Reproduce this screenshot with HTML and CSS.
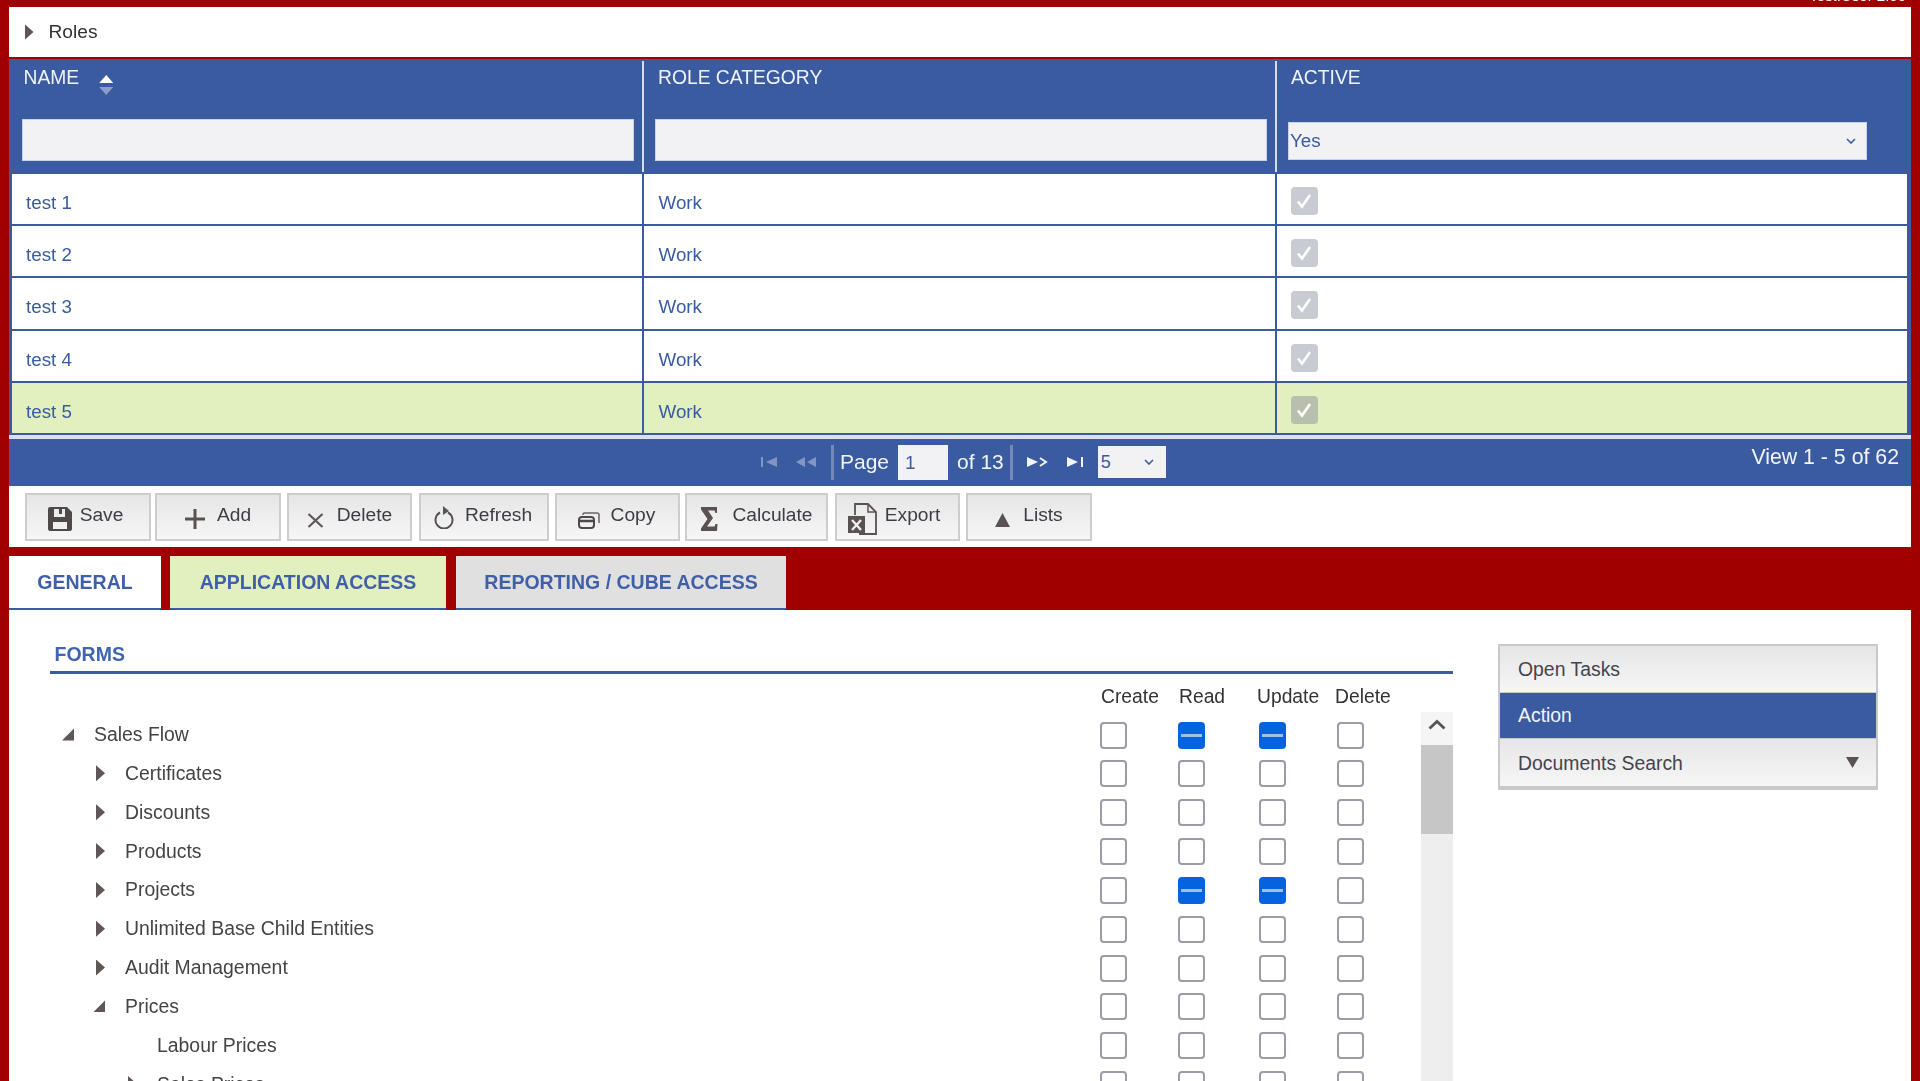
FILE: index.html
```html
<!DOCTYPE html>
<html lang="en">
<head>
<meta charset="utf-8">
<title>Roles</title>
<link rel="stylesheet" href="styles.css">
</head>
<body>
<div class="topbar"><span class="topbar-text">Test.User 2.00</span></div>
<main class="main">
  <div class="roles-bar"><span class="tri-right"></span><span>Roles</span></div>

  <section class="grid">
    <div class="grid-head">
      <div class="head-cell head-first">
        <div class="head-label">NAME <span class="sort"><i class="sort-up"></i><i class="sort-down"></i></span></div>
        <div class="filter"></div>
      </div>
      <div class="head-cell">
        <div class="head-label">ROLE CATEGORY</div>
        <div class="filter"></div>
      </div>
      <div class="head-cell head-last">
        <div class="head-label">ACTIVE</div>
        <div class="filter filter-select"><span>Yes</span>
          <svg class="chev" viewBox="0 0 10 6" width="10" height="6"><path d="M1 1l4 4 4-4" fill="none" stroke="#3a5ba0" stroke-width="1.6"/></svg>
        </div>
      </div>
    </div>

    <div class="grid-body">
      <div class="row"><div class="cell cell-name">test 1</div><div class="cell cell-cat">Work</div><div class="cell cell-active"><span class="ro-check"><svg viewBox="0 0 20 20" width="20" height="20"><path d="M4 10.5l4 5L16 4" fill="none" stroke="#fff" stroke-width="2.6"/></svg></span></div></div>
      <div class="row"><div class="cell cell-name">test 2</div><div class="cell cell-cat">Work</div><div class="cell cell-active"><span class="ro-check"><svg viewBox="0 0 20 20" width="20" height="20"><path d="M4 10.5l4 5L16 4" fill="none" stroke="#fff" stroke-width="2.6"/></svg></span></div></div>
      <div class="row"><div class="cell cell-name">test 3</div><div class="cell cell-cat">Work</div><div class="cell cell-active"><span class="ro-check"><svg viewBox="0 0 20 20" width="20" height="20"><path d="M4 10.5l4 5L16 4" fill="none" stroke="#fff" stroke-width="2.6"/></svg></span></div></div>
      <div class="row"><div class="cell cell-name">test 4</div><div class="cell cell-cat">Work</div><div class="cell cell-active"><span class="ro-check"><svg viewBox="0 0 20 20" width="20" height="20"><path d="M4 10.5l4 5L16 4" fill="none" stroke="#fff" stroke-width="2.6"/></svg></span></div></div>
      <div class="row row-selected"><div class="cell cell-name">test 5</div><div class="cell cell-cat">Work</div><div class="cell cell-active"><span class="ro-check"><svg viewBox="0 0 20 20" width="20" height="20"><path d="M4 10.5l4 5L16 4" fill="none" stroke="#fff" stroke-width="2.6"/></svg></span></div></div>
    </div>

    <div class="pager">
      <svg class="pg pg-first" viewBox="0 0 18 12" width="18" height="12"><path d="M1 1h2v10H1zM17 1v10L6 6z" fill="#8296c4"/></svg>
      <svg class="pg pg-prev" viewBox="0 0 22 12" width="22" height="12"><path d="M10 1v10L1 6zM21 1v10l-9-5z" fill="#8296c4"/></svg>
      <span class="pg-sep pg-sep-a"></span>
      <span class="pg-text pg-page">Page</span>
      <span class="pg-input">1</span>
      <span class="pg-text pg-of">of 13</span>
      <span class="pg-sep pg-sep-b"></span>
      <svg class="pg pg-next" viewBox="0 0 22 12" width="22" height="12"><path d="M1 1v10l11-5z" fill="#f2f4fa"/><path d="M14 2l6 4-6 4" fill="none" stroke="#f2f4fa" stroke-width="2"/></svg>
      <svg class="pg pg-last" viewBox="0 0 18 12" width="18" height="12"><path d="M1 1v10l11-5zM15 1h2v10h-2z" fill="#f2f4fa"/></svg>
      <span class="pg-select"><span>5</span><svg viewBox="0 0 10 6" width="10" height="6"><path d="M1 1l4 4 4-4" fill="none" stroke="#3a5ba0" stroke-width="1.6"/></svg></span>
      <span class="pg-view">View 1 - 5 of 62</span>
    </div>
  </section>

  <div class="toolbar">
    <button class="btn btn-save" type="button">
      <svg class="ico ico-save" viewBox="0 0 24 24" width="24" height="24"><path fill-rule="evenodd" d="M2 0h17l5 5v17a2 2 0 0 1-2 2H2a2 2 0 0 1-2-2V2a2 2 0 0 1 2-2zM6 2v8h11V2h-3v5h-3V2zM5 15v7h14v-7z" fill="#4f4a4a"/></svg><span>Save</span></button>
    <button class="btn btn-add" type="button">
      <svg class="ico ico-add" viewBox="0 0 20 20" width="20" height="20"><path d="M8.5 0h3v8.500H20v3h-8.500V20h-3v-8.500H0v-3h8.500z" fill="#5a5252"/></svg><span>Add</span></button>
    <button class="btn btn-delete" type="button">
      <svg class="ico ico-delete" viewBox="0 0 17 15" width="17" height="15"><path d="M1.500 1l14 13M15.500 1l-14 13" fill="none" stroke="#5f5858" stroke-width="2.200"/></svg><span>Delete</span></button>
    <button class="btn btn-refresh" type="button">
      <svg class="ico ico-refresh" viewBox="0 0 20 23" width="20" height="23"><path d="M6 6.500a8.500 8.500 0 1 0 8 0" fill="none" stroke="#5a5252" stroke-width="2"/><path d="M9 0l6 5-6 4z" fill="#5a5252"/></svg><span>Refresh</span></button>
    <button class="btn btn-copy" type="button">
      <svg class="ico ico-copy" viewBox="0 0 22 17" width="22" height="17"><rect x="1" y="5" width="15" height="11" rx="3" fill="none" stroke="#4f4a4a" stroke-width="2"/><path d="M1.500 9h14" stroke="#4f4a4a" stroke-width="2.500"/><path d="M5 3V2.500A1.500 1.500 0 0 1 6.500 1H19a2 2 0 0 1 2 2v8" fill="none" stroke="#6a6464" stroke-width="1.500"/></svg><span>Copy</span></button>
    <button class="btn btn-calc" type="button">
      <svg class="ico ico-calc" viewBox="0 0 17 24" width="17" height="24"><path d="M0 0H16V6H14.500L13.500 3.500H7L12 11L6 19.500H13.500L14.500 17H16.500L16 24H0V21.500L6.500 12L0 2.500Z" fill="#5a5252"/></svg><span>Calculate</span></button>
    <button class="btn btn-export" type="button">
      <svg class="ico ico-export" viewBox="0 0 29 32" width="29" height="32"><path d="M7 12V1h13l8 8v22H11" fill="none" stroke="#5a5252" stroke-width="1.800"/><path d="M20 1v8h8" fill="none" stroke="#5a5252" stroke-width="1.500"/><rect x="0" y="13" width="17" height="17" fill="#5a5252"/><path d="M4 17l9 10M13 17l-9 10" stroke="#eee" stroke-width="2.400"/></svg><span>Export</span></button>
    <button class="btn btn-lists" type="button">
      <svg class="ico ico-lists" viewBox="0 0 15 14" width="15" height="14"><path d="M7.500 0L15 14H0z" fill="#5a5252"/></svg><span>Lists</span></button>
  </div>

  <nav class="tabs">
    <div class="tab tab-general">GENERAL</div>
    <div class="tab tab-app">APPLICATION ACCESS</div>
    <div class="tab tab-report">REPORTING / CUBE ACCESS</div>
  </nav>

  <section class="lower">
    <div class="forms">
      <h2 class="forms-title">FORMS</h2>
      <div class="perm-head"><span>Create</span><span>Read</span><span>Update</span><span>Delete</span></div>
      <div class="forms-body">
        <div class="tree">
          <div class="tree-row"><div class="tree-name l0"><span class="slot"><i class="tri-down"></i></span>Sales Flow</div><span class="cb"></span><span class="cb cb-mixed"></span><span class="cb cb-mixed"></span><span class="cb"></span></div>
          <div class="tree-row"><div class="tree-name l1"><span class="slot"><i class="tri-right"></i></span>Certificates</div><span class="cb"></span><span class="cb"></span><span class="cb"></span><span class="cb"></span></div>
          <div class="tree-row"><div class="tree-name l1"><span class="slot"><i class="tri-right"></i></span>Discounts</div><span class="cb"></span><span class="cb"></span><span class="cb"></span><span class="cb"></span></div>
          <div class="tree-row"><div class="tree-name l1"><span class="slot"><i class="tri-right"></i></span>Products</div><span class="cb"></span><span class="cb"></span><span class="cb"></span><span class="cb"></span></div>
          <div class="tree-row"><div class="tree-name l1"><span class="slot"><i class="tri-right"></i></span>Projects</div><span class="cb"></span><span class="cb cb-mixed"></span><span class="cb cb-mixed"></span><span class="cb"></span></div>
          <div class="tree-row"><div class="tree-name l1"><span class="slot"><i class="tri-right"></i></span>Unlimited Base Child Entities</div><span class="cb"></span><span class="cb"></span><span class="cb"></span><span class="cb"></span></div>
          <div class="tree-row"><div class="tree-name l1"><span class="slot"><i class="tri-right"></i></span>Audit Management</div><span class="cb"></span><span class="cb"></span><span class="cb"></span><span class="cb"></span></div>
          <div class="tree-row"><div class="tree-name l1"><span class="slot"><i class="tri-down"></i></span>Prices</div><span class="cb"></span><span class="cb"></span><span class="cb"></span><span class="cb"></span></div>
          <div class="tree-row"><div class="tree-name l2"><span class="slot"></span>Labour Prices</div><span class="cb"></span><span class="cb"></span><span class="cb"></span><span class="cb"></span></div>
          <div class="tree-row"><div class="tree-name l2"><span class="slot"><i class="tri-right"></i></span>Sales Prices</div><span class="cb"></span><span class="cb"></span><span class="cb"></span><span class="cb"></span></div>
        </div>
        <div class="scrollbar">
          <div class="scroll-btn"><svg viewBox="0 0 18 11" width="18" height="11"><path d="M1.500 9.500L9 2.500l7.500 7" fill="none" stroke="#555" stroke-width="2.800"/></svg></div>
          <div class="scroll-thumb"></div>
        </div>
      </div>
    </div>
    <aside class="side">
      <div class="side-item">Open Tasks</div>
      <div class="side-item side-active">Action</div>
      <div class="side-item side-last">Documents Search<i class="side-arrow"></i></div>
    </aside>
  </section>
</main>
</body>
</html>
```
FILE: styles.css
```css
* { box-sizing: border-box; }
html, body { margin: 0; padding: 0; height: 1081px; overflow: hidden; }
body {
  background: #a00000;
  font-family: "Liberation Sans", Arial, sans-serif;
  font-size: 19px;
  color: #3a3a3a;
}
.topbar { height: 7px; overflow: hidden; display: flex; justify-content: flex-end; align-items: flex-start; padding-right: 14px; filter: blur(0.4px); }
.topbar-text { color: #fff; font-size: 15px; line-height: 16px; margin-top: -12px; }
.main { margin: 0 9px; filter: blur(0.4px); }

.roles-bar { height: 50px; margin-bottom: 2px; background: #fff; display: flex; align-items: center; gap: 15px; padding-left: 15.500px; font-size: 19.200px; color: #333; }
.tri-right { display: block; width: 9px; height: 16px; background: #5f5656; clip-path: polygon(0 0, 100% 50%, 0 100%); }
.tri-down { display: block; width: 12px; height: 12px; background: #5f5656; clip-path: polygon(100% 0, 100% 100%, 0 100%); }

.grid { background: #3a5ba0; padding: 0 4px 0 3px; height: 427px; }
.grid-head, .row { display: grid; grid-template-columns: 632px 633px 1fr; }
.grid-head { padding-top: 2px; height: 115px; color: #eef2fa; font-size: 19.300px; }
.head-cell { height: 111px; padding: 6px 8px 0 11px; border-right: 2px solid #d5ddee; }
.head-first { padding-left: 10px; }
.head-last { border-right: 0; padding-right: 40px; }
.head-label { height: 22px; line-height: 22px; padding-left: 3px; display: flex; align-items: center; gap: 20px; }
.head-first .head-label { padding-left: 1.500px; }
.sort { display: block; width: 14px; height: 20px; margin-top: 14px; }
.sort-up, .sort-down { display: block; width: 14px; height: 8px; }
.sort-up { background: #fff; clip-path: polygon(50% 0, 100% 100%, 0 100%); margin-bottom: 4px; }
.sort-down { background: #8a9cc8; clip-path: polygon(0 0, 100% 0, 50% 100%); }
.filter { margin-top: 30px; height: 42px; background: #f2f2f5; border: 1px solid #c8d2e8; }
.filter-select { margin-top: 33px; height: 38px; display: flex; align-items: center; justify-content: space-between; padding: 0 10px 0 1px; color: #3a5ba0; font-size: 18.800px; }

.row { height: 52.200px; background: #fff; border-bottom: 2px solid #3a5ba0; color: #3a5ba0; font-size: 18.800px; }
.row-selected { background: #e2efbf; }
.cell { display: flex; align-items: center; border-right: 2px solid #3a5ba0; padding-top: 8px; }
.cell-name { padding-left: 14px; }
.cell-cat { padding-left: 14.500px; }
.cell-active { border-right: 0; padding-left: 13.500px; padding-top: 4px; }
.ro-check { width: 27px; height: 28px; background: #c9cbd2; border-radius: 4px; display: flex; align-items: center; justify-content: center; }
.row-selected .ro-check { background: #b9bfae; }

.pager { height: 51px; margin: 0 -4px 0 -3px; border-top: 4px solid #d8e0f0; display: flex; align-items: center; color: #f2f4fa; font-size: 21px; }
.pg { display: block; flex: none; }
.pg-first { margin-left: 751px; }
.pg-prev { margin-left: 17px; }
.pg-sep { display: block; width: 3px; height: 35px; background: #7488ba; flex: none; }
.pg-sep-a { margin-left: 14px; }
.pg-page { margin-left: 6px; }
.pg-input { width: 50px; height: 35px; margin-left: 9px; background: #f2f2f5; color: #3a5ba0; font-size: 19px; line-height: 35px; padding-left: 7px; }
.pg-of { margin-left: 9px; }
.pg-sep-b { margin-left: 6px; }
.pg-next { margin-left: 13px; }
.pg-last { margin-left: 18px; }
.pg-select { width: 68px; height: 32px; margin-left: 14px; background: #f2f2f5; color: #3a5ba0; font-size: 18px; display: flex; align-items: center; justify-content: space-between; padding: 0 12px 0 3px; }
.pg-view { margin-left: auto; padding-right: 12px; margin-top: -10px; font-size: 21.300px; }

.toolbar { height: 61px; background: #fff; display: flex; align-items: flex-start; padding: 7px 0 0 16px; font-size: 19.200px; }
.btn { height: 48px; padding: 0; border: 2px solid #cdcdcd; background: linear-gradient(#e6e6e6, #f6f6f6); font: inherit; color: #3d3d46; display: flex; align-items: center; justify-content: center; gap: 9px; flex: none; }
.btn span { margin-bottom: 4px; }
.ico { display: block; flex: none; }
.ico-save { margin-top: 4px; }
.ico-add { margin-top: 4px; }
.ico-delete { margin-top: 6px; }
.ico-refresh { margin-top: 1px; }
.ico-copy { margin-top: 6px; }
.ico-calc { margin-top: 4px; }
.ico-export { margin-top: 4px; }
.ico-lists { margin-top: 5px; }
.btn-save { width: 126px; gap: 8px; padding-right: 5px; }
.btn-add { width: 126px; margin-left: 4px; gap: 12px; }
.btn-delete { width: 125px; margin-left: 6px; gap: 13px; }
.btn-refresh { width: 130px; margin-left: 7px; gap: 11px; padding-right: 2px; }
.btn-copy { width: 125px; margin-left: 6px; gap: 11px; padding-right: 2px; }
.btn-calc { width: 143px; margin-left: 5px; gap: 15px; }
.btn-export { width: 125px; margin-left: 7px; gap: 8px; padding-right: 7px; }
.btn-lists { width: 126px; margin-left: 6px; gap: 13px; }

.tabs { margin-top: 9px; height: 54px; display: flex; gap: 9px; }
.tab { height: 54px; display: flex; align-items: center; justify-content: center; font-weight: 700; font-size: 19.500px; color: #3f5fa8; border-bottom: 2px solid #3a5ba0; }
.tab-general { width: 152px; background: #fff; }
.tab-app { width: 276px; background: #e2efbf; }
.tab-report { width: 330px; margin-left: 1px; background: #e0e0e0; }

.lower { background: #fff; height: 471px; display: flex; align-items: flex-start; padding: 32px 0 0 41px; }
.forms { width: 1403px; flex: none; }
.forms-title { margin: 0; height: 32px; line-height: 24px; padding-left: 4.500px; font-size: 19.500px; font-weight: 700; color: #3f64b0; border-bottom: 3px solid #3a5ba0; }
.perm-head { display: grid; grid-template-columns: repeat(4, 78px); padding-left: 1051px; height: 38px; align-items: center; padding-top: 8px; font-size: 19.300px; color: #333; }
.forms-body { display: flex; align-items: flex-start; }
.tree { width: 1371px; padding-top: 3.600px; flex: none; }
.tree-row { display: grid; grid-template-columns: 1050px 78px 81px 78px 84px; height: 38.850px; align-items: center; }
.tree-name { display: flex; align-items: center; font-size: 19.400px; color: #444; gap: 20px; margin-top: -1px; }
.slot { display: flex; justify-content: flex-end; align-items: center; width: 20px; flex: none; }
.l0 { padding-left: 4px; }
.l1 { padding-left: 35px; }
.l2 { padding-left: 67px; }
.cb { display: block; width: 27px; height: 27px; background: #fff; border: 2px solid #9c9ca8; border-radius: 4px; }
.cb-mixed { background: #0563e0; border-color: #0563e0; position: relative; }
.cb-mixed::after { content: ""; position: absolute; left: 1px; right: 1px; top: 10px; height: 3px; background: #9fc0ee; }

.scrollbar { width: 32px; height: 369px; background: #eee; flex: none; }
.scroll-btn { height: 33px; background: #f5f5f5; display: flex; align-items: center; justify-content: center; padding-bottom: 8px; }
.scroll-thumb { height: 89px; background: #c6c6c6; }

.side { width: 380px; margin: 2px 0 0 45px; border: 2px solid #c9c9c9; border-bottom-width: 4px; flex: none; background: #c9c9c9; }
.side-item { height: 46px; padding-left: 18px; display: flex; align-items: center; position: relative; background: linear-gradient(#e6e6e6, #f6f6f6); font-size: 19.400px; color: #44444c; margin-bottom: 1px; }
.side-active { height: 45px; background: #3a5ba0; color: #f2f4fa; }
.side-last { height: 47px; margin-bottom: 0; padding-top: 2px; }
.side-arrow { position: absolute; top: 18px; right: 17px; width: 13px; height: 11px; background: #5a5252; clip-path: polygon(0 0, 100% 0, 50% 100%); }
```
